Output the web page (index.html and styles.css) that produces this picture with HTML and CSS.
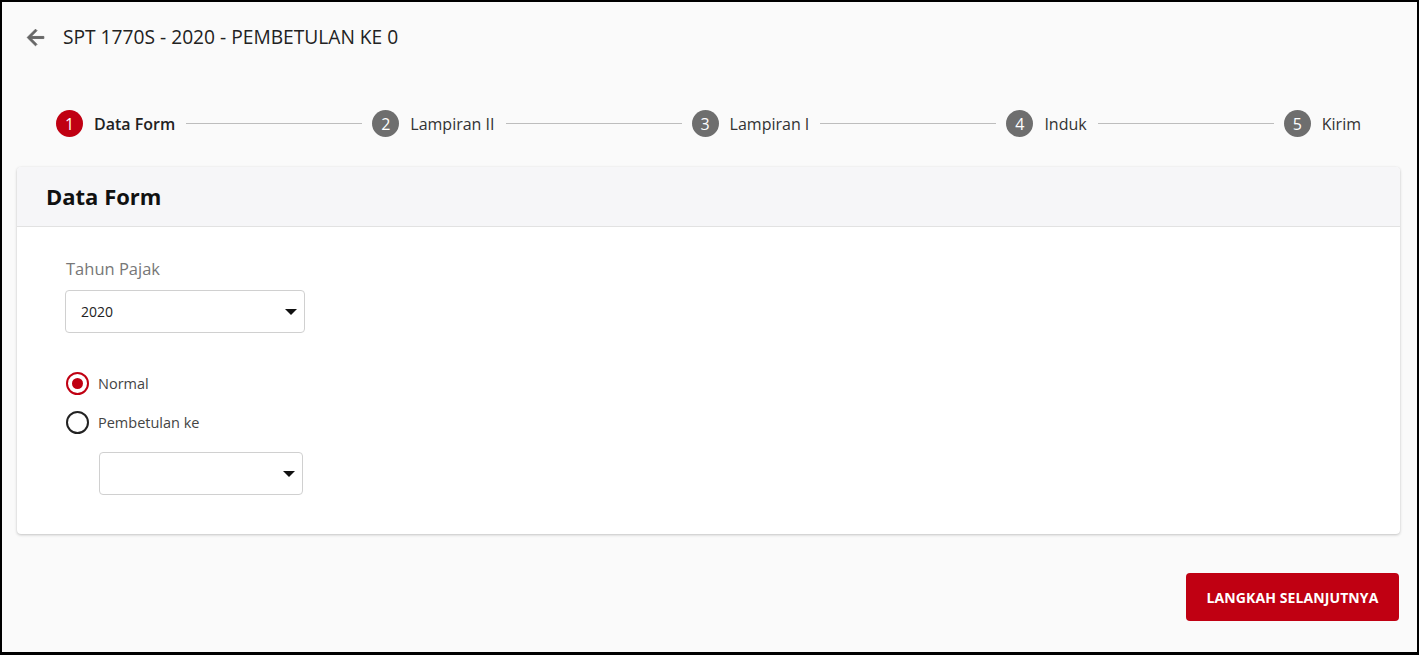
FILE: index.html
```html
<!DOCTYPE html>
<html lang="id">
<head>
<meta charset="utf-8">
<title>SPT 1770S</title>
<link rel="stylesheet" href="styles.css">
</head>
<body>
  <header class="topbar">
    <svg class="back" viewBox="0 0 24 24" aria-hidden="true"><path d="M20 11H7.83l5.59-5.59L12 4l-8 8 8 8 1.41-1.41L7.83 13H20v-2z"/></svg>
    <h1 class="title">SPT 1770S - 2020 - PEMBETULAN KE 0</h1>
  </header>

  <nav class="stepper">
    <div class="step active"><span class="num">1</span><span class="label">Data Form</span></div>
    <div class="line"></div>
    <div class="step"><span class="num">2</span><span class="label">Lampiran II</span></div>
    <div class="line"></div>
    <div class="step"><span class="num">3</span><span class="label">Lampiran I</span></div>
    <div class="line"></div>
    <div class="step"><span class="num">4</span><span class="label">Induk</span></div>
    <div class="line"></div>
    <div class="step"><span class="num">5</span><span class="label">Kirim</span></div>
  </nav>

  <section class="card">
    <div class="card-head">Data Form</div>
    <div class="card-body">
      <div class="field-label">Tahun Pajak</div>
      <div class="select wide"><span>2020</span><span class="caret"></span></div>

      <div class="radios">
        <div class="radio checked"><span class="ring"></span><span>Normal</span></div>
        <div class="radio"><span class="ring"></span><span>Pembetulan ke</span></div>
      </div>

      <div class="select narrow"><span></span><span class="caret"></span></div>
    </div>
  </section>

  <div class="actions">
    <button class="next">LANGKAH SELANJUTNYA</button>
  </div>
</body>
</html>
```

FILE: styles.css
```css
html, body {
  height: 100%;
  margin: 0;
}
body {
  box-sizing: border-box;
  border-style: solid;
  border-color: #000;
  border-width: 2px 2px 3px 2px;
  background: #fafafa;
  padding: 0 17px 0 15px;
  font-family: "Open Sans", "Noto Sans", sans-serif;
  color: #222;
  display: flex;
  flex-direction: column;
}

.topbar {
  display: flex;
  align-items: center;
  height: 28px;
  margin-top: 21px;
}
.back {
  width: 25px;
  height: 25px;
  fill: #666;
  stroke: #666;
  stroke-width: 0.9;
  stroke-linejoin: round;
  margin-left: 6px;
  margin-right: 15px;
}
.title {
  margin: 0;
  font-size: 19.2px;
  font-weight: 400;
  color: #222;
  line-height: 28px;
}

.stepper {
  display: flex;
  align-items: center;
  height: 27px;
  margin-top: 59px;
  padding: 0 39px;
}
.step {
  display: flex;
  align-items: center;
  gap: 11px;
}
.num {
  width: 27px;
  height: 27px;
  border-radius: 50%;
  background: #6e6e6e;
  color: #fff;
  font-size: 16px;
  display: flex;
  align-items: center;
  justify-content: center;
}
.step.active .num {
  background: #c00012;
}
.label {
  font-size: 16px;
  color: #333;
  line-height: 22px;
}
.step.active .label {
  font-weight: 600;
  color: #222;
}
.line {
  flex: 1;
  height: 1px;
  background: #bdbdbd;
  margin: 0 10px 0 11px;
}

.card {
  margin-top: 30px;
  background: #fff;
  border-radius: 4px;
  box-shadow: 0 1px 3px rgba(0, 0, 0, 0.22), 0 0 1px rgba(0, 0, 0, 0.08);
}
.card-head {
  box-sizing: border-box;
  height: 60px;
  display: flex;
  align-items: center;
  padding-left: 29px;
  padding-bottom: 1px;
  background: #f6f6f8;
  border-bottom: 1px solid #e2e2e2;
  border-radius: 4px 4px 0 0;
  font-size: 22px;
  font-weight: 700;
  color: #111;
}
.card-body {
  padding: 30px 48px 39px 48px;
}
.field-label {
  font-size: 16.5px;
  line-height: 24px;
  color: #777;
  padding-left: 1px;
}
.select {
  box-sizing: border-box;
  height: 43px;
  border: 1px solid #d0d0d0;
  border-radius: 4px;
  display: flex;
  align-items: center;
  justify-content: space-between;
  padding: 0 7px 0 15px;
  font-size: 14px;
  color: #222;
  background: #fff;
}
.select.wide {
  width: 240px;
  margin-top: 9px;
}
.select.narrow {
  width: 204px;
  margin-top: 18px;
  margin-left: 34px;
}
.caret {
  width: 0;
  height: 0;
  border-left: 6px solid transparent;
  border-right: 6px solid transparent;
  border-top: 6px solid #111;
}

.radios {
  display: flex;
  flex-direction: column;
  gap: 15px;
  margin-top: 38px;
}
.radio {
  display: flex;
  align-items: center;
  height: 24px;
  gap: 9px;
  font-size: 14.5px;
  color: #444;
  padding-left: 1px;
}
.ring {
  box-sizing: border-box;
  width: 23px;
  height: 23px;
  border-radius: 50%;
  border: 2px solid #222;
  display: flex;
  align-items: center;
  justify-content: center;
}
.radio.checked .ring {
  border-color: #c00012;
}
.radio.checked .ring::after {
  content: "";
  width: 11px;
  height: 11px;
  border-radius: 50%;
  background: #c00012;
}

.actions {
  display: flex;
  justify-content: flex-end;
  margin-top: 39px;
}
.next {
  height: 48px;
  width: 213px;
  margin-right: 1px;
  border: none;
  border-radius: 4px;
  background: #c00012;
  color: #fff;
  font-family: "Open Sans", "Noto Sans", sans-serif;
  font-size: 14px;
  font-weight: 700;
  letter-spacing: 0.1px;
}
```
